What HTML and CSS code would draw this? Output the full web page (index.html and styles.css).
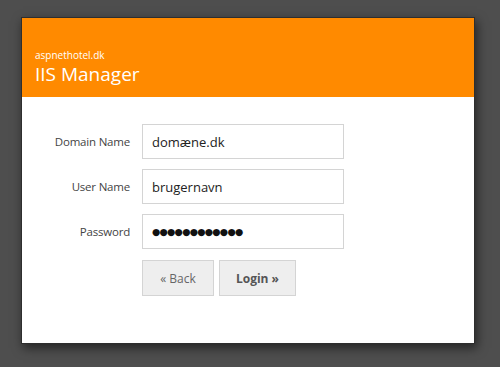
FILE: index.html
```html
<!DOCTYPE html>
<html lang="da">
<head>
  <meta charset="UTF-8">
  <title>IIS Manager</title>
  <link rel="stylesheet" href="styles.css">
</head>
<body>
  <div class="card">
    <div class="header">
      <div class="site">aspnethotel.dk</div>
      <h1>IIS Manager</h1>
    </div>
    <form class="login-form">
      <label for="domain">Domain Name</label>
      <input type="text" id="domain" value="domæne.dk">
      <label for="user">User Name</label>
      <input type="text" id="user" value="brugernavn">
      <label for="pass">Password</label>
      <input type="text" id="pass" class="secret" value="●●●●●●●●●●●●">
      <div class="buttons">
        <button type="button">« Back</button>
        <button type="submit" class="primary">Login »</button>
      </div>
    </form>
  </div>
</body>
</html>
```

FILE: styles.css
```css
html, body {
  margin: 0;
  height: 100%;
}
body {
  background: #4e4e4e;
  font-family: "Open Sans", "Noto Sans", sans-serif;
  padding-top: 17px;
  box-sizing: border-box;
}
.card {
  width: 454px;
  height: 327px;
  margin-left: 21px;
  background: #fff;
  border: 1px solid #2e2e2e;
  box-sizing: border-box;
  box-shadow: 2px 4px 10px rgba(0,0,0,0.55);
}
.header {
  background: #ff8a00;
  height: 79px;
  padding: 31px 0 0 13px;
  box-sizing: border-box;
  color: #fff;
}
.site {
  font-size: 10px;
  line-height: 12px;
}
h1 {
  margin: 1px 0 0;
  font-size: 19px;
  font-weight: normal;
  line-height: 24px;
}
.login-form {
  display: grid;
  grid-template-columns: 108px 202px;
  column-gap: 12px;
  row-gap: 10px;
  padding-top: 27px;
}
.login-form label {
  text-align: right;
  font-size: 11.5px;
  color: #444;
  line-height: 35px;
  letter-spacing: -0.2px;
}
.login-form input {
  height: 35px;
  box-sizing: border-box;
  border: 1px solid #d4d4d4;
  padding: 0 9px;
  font-family: inherit;
  font-size: 13px;
  color: #222;
  outline: none;
}
.login-form input.secret {
  font-family: "DejaVu Sans", sans-serif;
  font-size: 9.5px;
  letter-spacing: -0.75px;
  color: #111;
}
.buttons {
  grid-column: 2;
  display: flex;
  gap: 5px;
  margin-top: 1px;
}
.buttons button {
  height: 36px;
  width: 72px;
  background: #eee;
  border: 1px solid #d4d4d4;
  font-family: inherit;
  font-size: 12px;
  color: #666;
}
.buttons button.primary {
  width: 77px;
  font-weight: bold;
  color: #555;
}
```
